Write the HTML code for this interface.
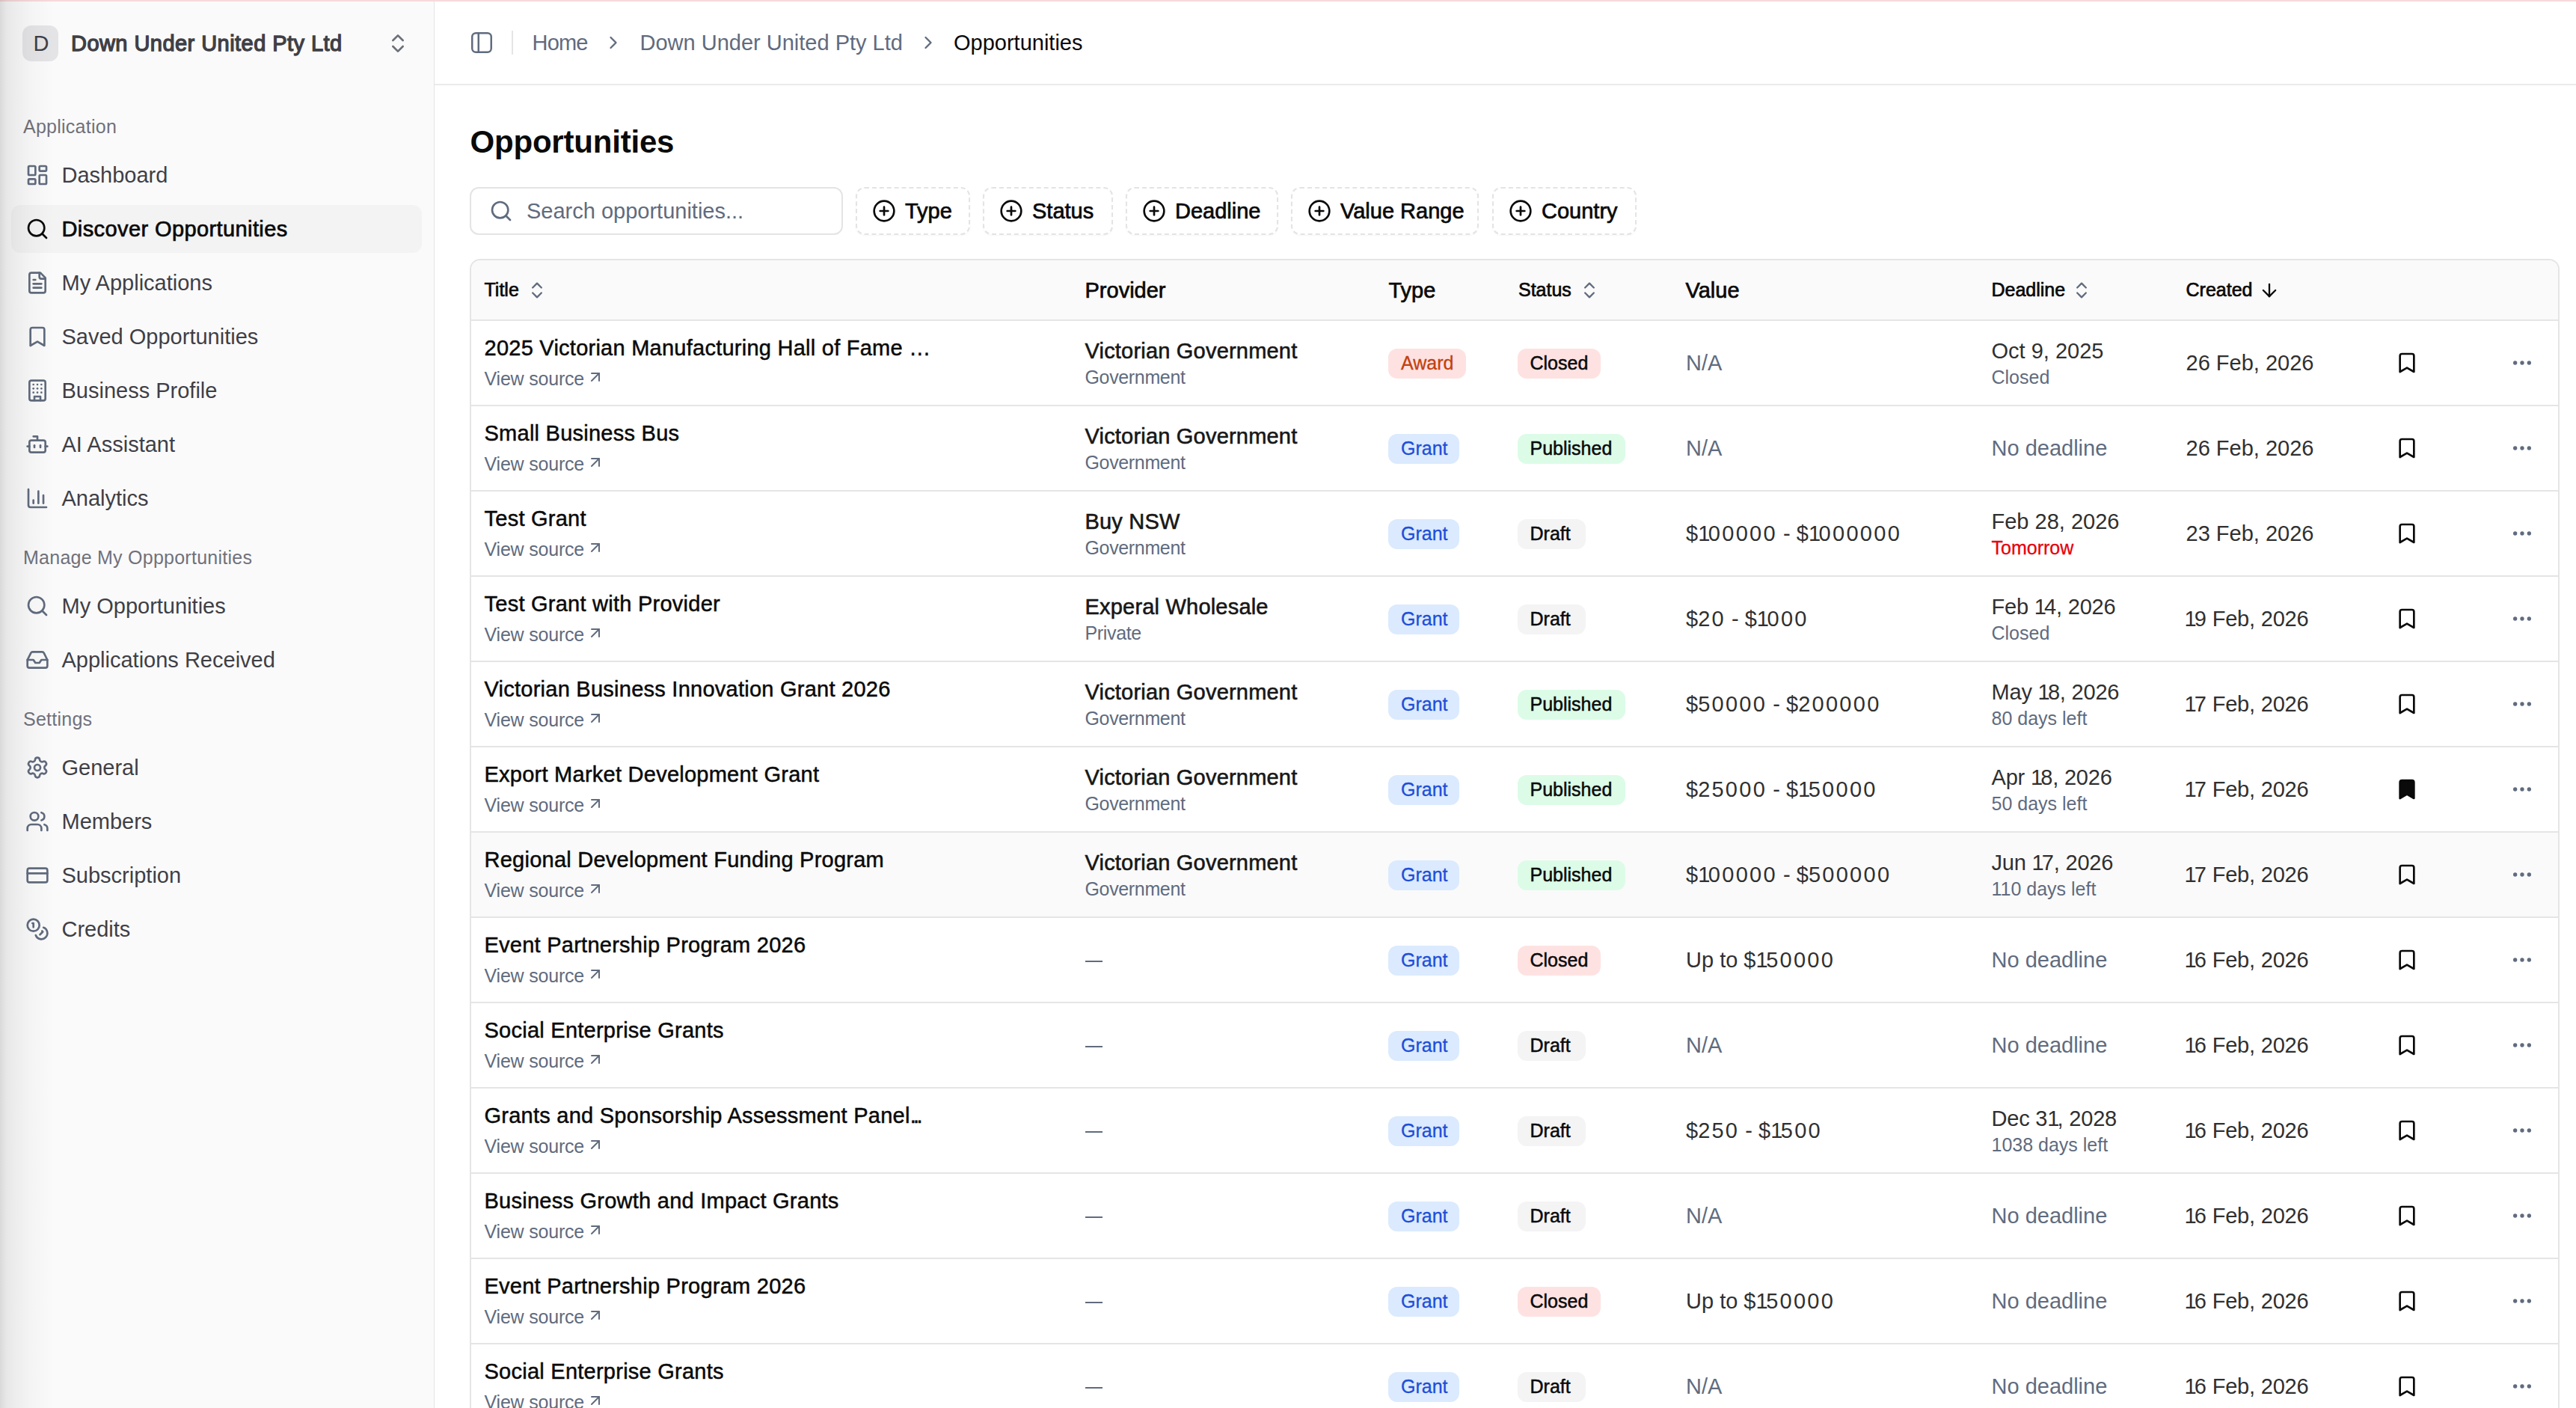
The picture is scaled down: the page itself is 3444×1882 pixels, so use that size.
<!DOCTYPE html>
<html><head><meta charset="utf-8"><title>Opportunities</title>
<style>
html,body{margin:0;padding:0;width:3444px;height:1882px;overflow:hidden;background:#fff;}
body{position:relative;font-family:"Liberation Sans",sans-serif;}
.t{position:absolute;line-height:40px;white-space:nowrap;}
svg{overflow:visible}
</style></head><body>
<div style="position:absolute;left:0px;top:0px;width:580px;height:1882px;background:#fafafa"></div>
<div style="position:absolute;left:580px;top:0px;width:1px;height:1882px;background:#e5e5e5"></div>
<div style="position:absolute;left:30px;top:34px;width:48px;height:48px;background:#e4e4e7;border-radius:12px"></div>
<div class="t" style="left:44.5px;top:38px;font-size:29px;color:#3f3f46;font-weight:400;">D</div>
<div class="t" style="left:95px;top:38px;font-size:29px;color:#3f3f46;font-weight:400;-webkit-text-stroke:1.3px #3f3f46;letter-spacing:0.45px">Down Under United Pty Ltd</div>
<svg style="position:absolute;left:515.5px;top:41.5px" width="32" height="32" viewBox="0 0 24 24" fill="none" stroke="#6b7078" stroke-width="2" stroke-linecap="round" stroke-linejoin="round"><path d="m7 15 5 5 5-5"/><path d="m7 9 5-5 5 5"/></svg>
<div class="t" style="left:31px;top:149px;font-size:25px;color:#71717a;font-weight:400;letter-spacing:0.25px">Application</div>
<svg style="position:absolute;left:34.0px;top:217.8px" width="32" height="32" viewBox="0 0 24 24" fill="none" stroke="#606b7e" stroke-width="2" stroke-linecap="round" stroke-linejoin="round"><rect width="7" height="9" x="3" y="3" rx="1"/><rect width="7" height="5" x="14" y="3" rx="1"/><rect width="7" height="9" x="14" y="12" rx="1"/><rect width="7" height="5" x="3" y="16" rx="1"/></svg>
<div class="t" style="left:82.5px;top:214px;font-size:29px;color:#3f3f46;font-weight:400;">Dashboard</div>
<div style="position:absolute;left:15px;top:274px;width:549px;height:64px;background:#f3f3f3;border-radius:12px"></div>
<svg style="position:absolute;left:34.0px;top:289.8px" width="32" height="32" viewBox="0 0 24 24" fill="none" stroke="#0a0a0a" stroke-width="2" stroke-linecap="round" stroke-linejoin="round"><circle cx="11" cy="11" r="8"/><path d="m21 21-4.34-4.34"/></svg>
<div class="t" style="left:82.5px;top:286px;font-size:29px;color:#0a0a0a;font-weight:400;-webkit-text-stroke:0.7px #0a0a0a;letter-spacing:0.4px">Discover Opportunities</div>
<svg style="position:absolute;left:34.0px;top:361.8px" width="32" height="32" viewBox="0 0 24 24" fill="none" stroke="#606b7e" stroke-width="2" stroke-linecap="round" stroke-linejoin="round"><path d="M15 2H6a2 2 0 0 0-2 2v16a2 2 0 0 0 2 2h12a2 2 0 0 0 2-2V7Z"/><path d="M14 2v4a2 2 0 0 0 2 2h4"/><path d="M10 9H8"/><path d="M16 13H8"/><path d="M16 17H8"/></svg>
<div class="t" style="left:82.5px;top:358px;font-size:29px;color:#3f3f46;font-weight:400;">My Applications</div>
<svg style="position:absolute;left:34.0px;top:433.8px" width="32" height="32" viewBox="0 0 24 24" fill="none" stroke="#606b7e" stroke-width="2" stroke-linecap="round" stroke-linejoin="round"><path d="m19 21-7-4-7 4V5a2 2 0 0 1 2-2h10a2 2 0 0 1 2 2v16z"/></svg>
<div class="t" style="left:82.5px;top:430px;font-size:29px;color:#3f3f46;font-weight:400;">Saved Opportunities</div>
<svg style="position:absolute;left:34.0px;top:505.79999999999995px" width="32" height="32" viewBox="0 0 24 24" fill="none" stroke="#606b7e" stroke-width="2" stroke-linecap="round" stroke-linejoin="round"><rect width="16" height="20" x="4" y="2" rx="2" ry="2"/><path d="M9 22v-4h6v4"/><path d="M8 6h.01"/><path d="M16 6h.01"/><path d="M12 6h.01"/><path d="M12 10h.01"/><path d="M12 14h.01"/><path d="M16 10h.01"/><path d="M16 14h.01"/><path d="M8 10h.01"/><path d="M8 14h.01"/></svg>
<div class="t" style="left:82.5px;top:502px;font-size:29px;color:#3f3f46;font-weight:400;">Business Profile</div>
<svg style="position:absolute;left:34.0px;top:577.8px" width="32" height="32" viewBox="0 0 24 24" fill="none" stroke="#606b7e" stroke-width="2" stroke-linecap="round" stroke-linejoin="round"><path d="M12 8V4H8"/><rect width="16" height="12" x="4" y="8" rx="2"/><path d="M2 14h2"/><path d="M20 14h2"/><path d="M15 13v2"/><path d="M9 13v2"/></svg>
<div class="t" style="left:82.5px;top:574px;font-size:29px;color:#3f3f46;font-weight:400;">AI Assistant</div>
<svg style="position:absolute;left:34.0px;top:649.8px" width="32" height="32" viewBox="0 0 24 24" fill="none" stroke="#606b7e" stroke-width="2" stroke-linecap="round" stroke-linejoin="round"><path d="M3 3v16a2 2 0 0 0 2 2h16"/><path d="M18 17V9"/><path d="M13 17V5"/><path d="M8 17v-3"/></svg>
<div class="t" style="left:82.5px;top:646px;font-size:29px;color:#3f3f46;font-weight:400;">Analytics</div>
<div class="t" style="left:31px;top:725px;font-size:25px;color:#71717a;font-weight:400;letter-spacing:0.25px">Manage My Oppportunities</div>
<svg style="position:absolute;left:34.0px;top:793.8px" width="32" height="32" viewBox="0 0 24 24" fill="none" stroke="#606b7e" stroke-width="2" stroke-linecap="round" stroke-linejoin="round"><circle cx="11" cy="11" r="8"/><path d="m21 21-4.34-4.34"/></svg>
<div class="t" style="left:82.5px;top:790px;font-size:29px;color:#3f3f46;font-weight:400;">My Opportunities</div>
<svg style="position:absolute;left:34.0px;top:865.8px" width="32" height="32" viewBox="0 0 24 24" fill="none" stroke="#606b7e" stroke-width="2" stroke-linecap="round" stroke-linejoin="round"><polyline points="22 12 16 12 14 15 10 15 8 12 2 12"/><path d="M5.45 5.11 2 12v6a2 2 0 0 0 2 2h16a2 2 0 0 0 2-2v-6l-3.45-6.89A2 2 0 0 0 16.76 4H7.24a2 2 0 0 0-1.79 1.11z"/></svg>
<div class="t" style="left:82.5px;top:862px;font-size:29px;color:#3f3f46;font-weight:400;">Applications Received</div>
<div class="t" style="left:31px;top:941px;font-size:25px;color:#71717a;font-weight:400;letter-spacing:0.25px">Settings</div>
<svg style="position:absolute;left:34.0px;top:1009.8px" width="32" height="32" viewBox="0 0 24 24" fill="none" stroke="#606b7e" stroke-width="2" stroke-linecap="round" stroke-linejoin="round"><path d="M9.671 4.136a2.34 2.34 0 0 1 4.659 0 2.34 2.34 0 0 0 3.319 1.915 2.34 2.34 0 0 1 2.33 4.033 2.34 2.34 0 0 0 0 3.831 2.34 2.34 0 0 1-2.33 4.033 2.34 2.34 0 0 0-3.319 1.915 2.34 2.34 0 0 1-4.659 0 2.34 2.34 0 0 0-3.32-1.915 2.34 2.34 0 0 1-2.33-4.033 2.34 2.34 0 0 0 0-3.831A2.34 2.34 0 0 1 6.35 6.051a2.34 2.34 0 0 0 3.319-1.915"/><circle cx="12" cy="12" r="3"/></svg>
<div class="t" style="left:82.5px;top:1006px;font-size:29px;color:#3f3f46;font-weight:400;">General</div>
<svg style="position:absolute;left:34.0px;top:1081.8px" width="32" height="32" viewBox="0 0 24 24" fill="none" stroke="#606b7e" stroke-width="2" stroke-linecap="round" stroke-linejoin="round"><path d="M16 21v-2a4 4 0 0 0-4-4H6a4 4 0 0 0-4 4v2"/><circle cx="9" cy="7" r="4"/><path d="M22 21v-2a4 4 0 0 0-3-3.87"/><path d="M16 3.13a4 4 0 0 1 0 7.75"/></svg>
<div class="t" style="left:82.5px;top:1078px;font-size:29px;color:#3f3f46;font-weight:400;">Members</div>
<svg style="position:absolute;left:34.0px;top:1153.8px" width="32" height="32" viewBox="0 0 24 24" fill="none" stroke="#606b7e" stroke-width="2" stroke-linecap="round" stroke-linejoin="round"><rect width="20" height="14" x="2" y="5" rx="2"/><line x1="2" x2="22" y1="10" y2="10"/></svg>
<div class="t" style="left:82.5px;top:1150px;font-size:29px;color:#3f3f46;font-weight:400;">Subscription</div>
<svg style="position:absolute;left:34.0px;top:1225.8px" width="32" height="32" viewBox="0 0 24 24" fill="none" stroke="#606b7e" stroke-width="2" stroke-linecap="round" stroke-linejoin="round"><circle cx="8" cy="8" r="6"/><path d="M18.09 10.37A6 6 0 1 1 10.34 18"/><path d="M7 6h1v4"/><path d="m16.71 13.88.7.71-2.82 2.82"/></svg>
<div class="t" style="left:82.5px;top:1222px;font-size:29px;color:#3f3f46;font-weight:400;">Credits</div>
<div style="position:absolute;left:581px;top:112px;width:2863px;height:2px;background:#ebebeb"></div>
<div style="position:absolute;left:0px;top:0px;width:3444px;height:2px;background:#f7d9d9"></div>
<svg style="position:absolute;left:627.0px;top:39.8px" width="34" height="34" viewBox="0 0 24 24" fill="none" stroke="#606b7e" stroke-width="1.75" stroke-linecap="round" stroke-linejoin="round"><rect width="18" height="18" x="3" y="3" rx="3.5"/><path d="M9 3v18"/></svg>
<div style="position:absolute;left:684px;top:41px;width:2px;height:32px;background:#e5e5e5"></div>
<div class="t" style="left:711.5px;top:37px;font-size:29px;color:#606b7e;font-weight:400;letter-spacing:-0.8px">Home</div>
<svg style="position:absolute;left:806.0px;top:43.0px" width="28" height="28" viewBox="0 0 24 24" fill="none" stroke="#606b7e" stroke-width="2" stroke-linecap="round" stroke-linejoin="round"><path d="m9 18 6-6-6-6"/></svg>
<div class="t" style="left:855.5px;top:37px;font-size:29px;color:#606b7e;font-weight:400;">Down Under United Pty Ltd</div>
<svg style="position:absolute;left:1227.0px;top:43.0px" width="28" height="28" viewBox="0 0 24 24" fill="none" stroke="#606b7e" stroke-width="2" stroke-linecap="round" stroke-linejoin="round"><path d="m9 18 6-6-6-6"/></svg>
<div class="t" style="left:1275px;top:37px;font-size:29px;color:#0a0a0a;font-weight:400;">Opportunities</div>
<div class="t" style="left:628.5px;top:170px;font-size:42px;color:#0a0a0a;font-weight:700;letter-spacing:-0.2px">Opportunities</div>
<div style="position:absolute;left:628px;top:250px;width:499px;height:64px;box-sizing:border-box;border:2px solid #e4e4e7;border-radius:12px;background:#fff"></div>
<svg style="position:absolute;left:654.0px;top:266.0px" width="32" height="32" viewBox="0 0 24 24" fill="none" stroke="#606b7e" stroke-width="2" stroke-linecap="round" stroke-linejoin="round"><circle cx="11" cy="11" r="8"/><path d="m21 21-4.34-4.34"/></svg>
<div class="t" style="left:704px;top:262px;font-size:29px;color:#606b7e;font-weight:400;">Search opportunities...</div>
<div style="position:absolute;left:1144px;top:250px;width:153px;height:64px;box-sizing:border-box;border:2px dashed #e4e4e7;border-radius:12px;background:#fff;box-shadow:0 1px 2px rgba(0,0,0,0.04)"></div>
<svg style="position:absolute;left:1165.5px;top:266.0px" width="32" height="32" viewBox="0 0 24 24" fill="none" stroke="#0a0a0a" stroke-width="2" stroke-linecap="round" stroke-linejoin="round"><circle cx="12" cy="12" r="10"/><path d="M8 12h8"/><path d="M12 8v8"/></svg>
<div class="t" style="left:1210px;top:262px;font-size:29px;color:#0a0a0a;font-weight:400;-webkit-text-stroke:0.7px #0a0a0a">Type</div>
<div style="position:absolute;left:1314px;top:250px;width:174px;height:64px;box-sizing:border-box;border:2px dashed #e4e4e7;border-radius:12px;background:#fff;box-shadow:0 1px 2px rgba(0,0,0,0.04)"></div>
<svg style="position:absolute;left:1335.5px;top:266.0px" width="32" height="32" viewBox="0 0 24 24" fill="none" stroke="#0a0a0a" stroke-width="2" stroke-linecap="round" stroke-linejoin="round"><circle cx="12" cy="12" r="10"/><path d="M8 12h8"/><path d="M12 8v8"/></svg>
<div class="t" style="left:1380px;top:262px;font-size:29px;color:#0a0a0a;font-weight:400;-webkit-text-stroke:0.7px #0a0a0a">Status</div>
<div style="position:absolute;left:1505px;top:250px;width:204px;height:64px;box-sizing:border-box;border:2px dashed #e4e4e7;border-radius:12px;background:#fff;box-shadow:0 1px 2px rgba(0,0,0,0.04)"></div>
<svg style="position:absolute;left:1526.5px;top:266.0px" width="32" height="32" viewBox="0 0 24 24" fill="none" stroke="#0a0a0a" stroke-width="2" stroke-linecap="round" stroke-linejoin="round"><circle cx="12" cy="12" r="10"/><path d="M8 12h8"/><path d="M12 8v8"/></svg>
<div class="t" style="left:1571px;top:262px;font-size:29px;color:#0a0a0a;font-weight:400;-webkit-text-stroke:0.7px #0a0a0a">Deadline</div>
<div style="position:absolute;left:1726px;top:250px;width:251px;height:64px;box-sizing:border-box;border:2px dashed #e4e4e7;border-radius:12px;background:#fff;box-shadow:0 1px 2px rgba(0,0,0,0.04)"></div>
<svg style="position:absolute;left:1747.5px;top:266.0px" width="32" height="32" viewBox="0 0 24 24" fill="none" stroke="#0a0a0a" stroke-width="2" stroke-linecap="round" stroke-linejoin="round"><circle cx="12" cy="12" r="10"/><path d="M8 12h8"/><path d="M12 8v8"/></svg>
<div class="t" style="left:1792px;top:262px;font-size:29px;color:#0a0a0a;font-weight:400;-webkit-text-stroke:0.7px #0a0a0a">Value Range</div>
<div style="position:absolute;left:1995px;top:250px;width:193px;height:64px;box-sizing:border-box;border:2px dashed #e4e4e7;border-radius:12px;background:#fff;box-shadow:0 1px 2px rgba(0,0,0,0.04)"></div>
<svg style="position:absolute;left:2016.5px;top:266.0px" width="32" height="32" viewBox="0 0 24 24" fill="none" stroke="#0a0a0a" stroke-width="2" stroke-linecap="round" stroke-linejoin="round"><circle cx="12" cy="12" r="10"/><path d="M8 12h8"/><path d="M12 8v8"/></svg>
<div class="t" style="left:2061px;top:262px;font-size:29px;color:#0a0a0a;font-weight:400;-webkit-text-stroke:0.7px #0a0a0a">Country</div>
<div style="position:absolute;left:628px;top:346px;width:2794px;height:1556px;box-sizing:border-box;border:2px solid #e5e5e5;border-radius:14px;background:#fff;overflow:hidden"></div>
<div style="position:absolute;left:630px;top:348px;width:2790px;height:79px;background:#fafafa;border-radius:12px 12px 0 0"></div>
<div style="position:absolute;left:630px;top:427px;width:2790px;height:2px;background:#e5e5e5"></div>
<div class="t" style="left:647.5px;top:367px;font-size:25px;color:#0a0a0a;font-weight:400;-webkit-text-stroke:0.7px #0a0a0a">Title</div>
<svg style="position:absolute;left:704.0px;top:374.0px" width="28" height="28" viewBox="0 0 24 24" fill="none" stroke="#606b7e" stroke-width="2" stroke-linecap="round" stroke-linejoin="round"><path d="m7 15 5 5 5-5"/><path d="m7 9 5-5 5 5"/></svg>
<div class="t" style="left:1450.5px;top:368px;font-size:29px;color:#0a0a0a;font-weight:400;-webkit-text-stroke:0.7px #0a0a0a">Provider</div>
<div class="t" style="left:1856.5px;top:368px;font-size:29px;color:#0a0a0a;font-weight:400;-webkit-text-stroke:0.7px #0a0a0a">Type</div>
<div class="t" style="left:2030px;top:367px;font-size:25px;color:#0a0a0a;font-weight:400;-webkit-text-stroke:0.7px #0a0a0a">Status</div>
<svg style="position:absolute;left:2111.0px;top:374.0px" width="28" height="28" viewBox="0 0 24 24" fill="none" stroke="#606b7e" stroke-width="2" stroke-linecap="round" stroke-linejoin="round"><path d="m7 15 5 5 5-5"/><path d="m7 9 5-5 5 5"/></svg>
<div class="t" style="left:2253.5px;top:368px;font-size:29px;color:#0a0a0a;font-weight:400;-webkit-text-stroke:0.7px #0a0a0a">Value</div>
<div class="t" style="left:2662.5px;top:367px;font-size:25px;color:#0a0a0a;font-weight:400;-webkit-text-stroke:0.7px #0a0a0a">Deadline</div>
<svg style="position:absolute;left:2769.0px;top:374.0px" width="28" height="28" viewBox="0 0 24 24" fill="none" stroke="#606b7e" stroke-width="2" stroke-linecap="round" stroke-linejoin="round"><path d="m7 15 5 5 5-5"/><path d="m7 9 5-5 5 5"/></svg>
<div class="t" style="left:2922.5px;top:367px;font-size:25px;color:#0a0a0a;font-weight:400;-webkit-text-stroke:0.7px #0a0a0a">Created</div>
<svg style="position:absolute;left:3020.0px;top:374.0px" width="28" height="28" viewBox="0 0 24 24" fill="none" stroke="#0a0a0a" stroke-width="2" stroke-linecap="round" stroke-linejoin="round"><path d="M12 5v14"/><path d="m19 12-7 7-7-7"/></svg>
<div style="position:absolute;left:630px;top:541px;width:2790px;height:2px;background:#e5e5e5"></div>
<div class="t" style="left:647.5px;top:445px;font-size:29px;color:#0a0a0a;font-weight:400;-webkit-text-stroke:0.5px #0a0a0a;letter-spacing:0.25px">2025 Victorian Manufacturing Hall of Fame …</div>
<div class="t" style="left:647.5px;top:486px;font-size:25px;color:#606b7e;font-weight:400;letter-spacing:-0.2px">View source</div>
<svg style="position:absolute;left:784.0px;top:492.0px" width="24" height="24" viewBox="0 0 24 24" fill="none" stroke="#606b7e" stroke-width="2" stroke-linecap="round" stroke-linejoin="round"><path d="M7 7h10v10"/><path d="M7 17 17 7"/></svg>
<div class="t" style="left:1450.5px;top:449px;font-size:29px;color:#171717;font-weight:400;-webkit-text-stroke:0.6px #1a1a1a;letter-spacing:0.2px">Victorian Government</div>
<div class="t" style="left:1450.5px;top:484px;font-size:25px;color:#606b7e;font-weight:400;letter-spacing:-0.35px">Government</div>
<div style="position:absolute;left:1856px;top:466px;width:104px;height:40px;background:#fee2e2;border-radius:12px"></div>
<div class="t" style="left:1873px;top:465px;font-size:25px;color:#c2410c;font-weight:400;-webkit-text-stroke:0.3px #c2410c">Award</div>
<div style="position:absolute;left:2029px;top:466px;width:111px;height:40px;background:#fee2e2;border-radius:12px"></div>
<div class="t" style="left:2045.5px;top:465px;font-size:25px;color:#0a0a0a;font-weight:400;-webkit-text-stroke:0.5px #0a0a0a">Closed</div>
<div class="t" style="left:2254px;top:465px;font-size:29px;color:#606b7e;font-weight:400;">N/A</div>
<div class="t" style="left:2662.5px;top:449px;font-size:29px;color:#303030;font-weight:400;">Oct 9, 2025</div>
<div class="t" style="left:2662.5px;top:484px;font-size:25px;color:#606b7e;font-weight:400;">Closed</div>
<div class="t" style="left:2922.5px;top:465px;font-size:29px;color:#303030;font-weight:400;">26 Feb, 2026</div>
<svg style="position:absolute;left:3202.0px;top:469.0px" width="32" height="32" viewBox="0 0 24 24" fill="none" stroke="#0a0a0a" stroke-width="2" stroke-linecap="round" stroke-linejoin="round"><path d="m19 21-7-4-7 4V5a2 2 0 0 1 2-2h10a2 2 0 0 1 2 2v16z"/></svg>
<svg style="position:absolute;left:3356.0px;top:469.0px" width="32" height="32" viewBox="0 0 24 24" fill="none" stroke="#606b7e" stroke-width="2" stroke-linecap="round" stroke-linejoin="round"><circle cx="12" cy="12" r="1"/><circle cx="19" cy="12" r="1"/><circle cx="5" cy="12" r="1"/></svg>
<div style="position:absolute;left:630px;top:655px;width:2790px;height:2px;background:#e5e5e5"></div>
<div class="t" style="left:647.5px;top:559px;font-size:29px;color:#0a0a0a;font-weight:400;-webkit-text-stroke:0.5px #0a0a0a;letter-spacing:0.25px">Small Business Bus</div>
<div class="t" style="left:647.5px;top:600px;font-size:25px;color:#606b7e;font-weight:400;letter-spacing:-0.2px">View source</div>
<svg style="position:absolute;left:784.0px;top:606.0px" width="24" height="24" viewBox="0 0 24 24" fill="none" stroke="#606b7e" stroke-width="2" stroke-linecap="round" stroke-linejoin="round"><path d="M7 7h10v10"/><path d="M7 17 17 7"/></svg>
<div class="t" style="left:1450.5px;top:563px;font-size:29px;color:#171717;font-weight:400;-webkit-text-stroke:0.6px #1a1a1a;letter-spacing:0.2px">Victorian Government</div>
<div class="t" style="left:1450.5px;top:598px;font-size:25px;color:#606b7e;font-weight:400;letter-spacing:-0.35px">Government</div>
<div style="position:absolute;left:1856px;top:580px;width:95px;height:40px;background:#dbeafe;border-radius:12px"></div>
<div class="t" style="left:1873px;top:579px;font-size:25px;color:#1d4ed8;font-weight:400;-webkit-text-stroke:0.3px #1d4ed8">Grant</div>
<div style="position:absolute;left:2029px;top:580px;width:144px;height:40px;background:#dcfce7;border-radius:12px"></div>
<div class="t" style="left:2045.5px;top:579px;font-size:25px;color:#0a0a0a;font-weight:400;-webkit-text-stroke:0.5px #0a0a0a">Published</div>
<div class="t" style="left:2254px;top:579px;font-size:29px;color:#606b7e;font-weight:400;">N/A</div>
<div class="t" style="left:2662.5px;top:579px;font-size:29px;color:#606b7e;font-weight:400;">No deadline</div>
<div class="t" style="left:2922.5px;top:579px;font-size:29px;color:#303030;font-weight:400;">26 Feb, 2026</div>
<svg style="position:absolute;left:3202.0px;top:583.0px" width="32" height="32" viewBox="0 0 24 24" fill="none" stroke="#0a0a0a" stroke-width="2" stroke-linecap="round" stroke-linejoin="round"><path d="m19 21-7-4-7 4V5a2 2 0 0 1 2-2h10a2 2 0 0 1 2 2v16z"/></svg>
<svg style="position:absolute;left:3356.0px;top:583.0px" width="32" height="32" viewBox="0 0 24 24" fill="none" stroke="#606b7e" stroke-width="2" stroke-linecap="round" stroke-linejoin="round"><circle cx="12" cy="12" r="1"/><circle cx="19" cy="12" r="1"/><circle cx="5" cy="12" r="1"/></svg>
<div style="position:absolute;left:630px;top:769px;width:2790px;height:2px;background:#e5e5e5"></div>
<div class="t" style="left:647.5px;top:673px;font-size:29px;color:#0a0a0a;font-weight:400;-webkit-text-stroke:0.5px #0a0a0a;letter-spacing:0.25px">Test Grant</div>
<div class="t" style="left:647.5px;top:714px;font-size:25px;color:#606b7e;font-weight:400;letter-spacing:-0.2px">View source</div>
<svg style="position:absolute;left:784.0px;top:720.0px" width="24" height="24" viewBox="0 0 24 24" fill="none" stroke="#606b7e" stroke-width="2" stroke-linecap="round" stroke-linejoin="round"><path d="M7 7h10v10"/><path d="M7 17 17 7"/></svg>
<div class="t" style="left:1450.5px;top:677px;font-size:29px;color:#171717;font-weight:400;-webkit-text-stroke:0.6px #1a1a1a;letter-spacing:0.2px">Buy NSW</div>
<div class="t" style="left:1450.5px;top:712px;font-size:25px;color:#606b7e;font-weight:400;letter-spacing:-0.35px">Government</div>
<div style="position:absolute;left:1856px;top:694px;width:95px;height:40px;background:#dbeafe;border-radius:12px"></div>
<div class="t" style="left:1873px;top:693px;font-size:25px;color:#1d4ed8;font-weight:400;-webkit-text-stroke:0.3px #1d4ed8">Grant</div>
<div style="position:absolute;left:2029px;top:694px;width:91px;height:40px;background:#f4f4f5;border-radius:12px"></div>
<div class="t" style="left:2045.5px;top:693px;font-size:25px;color:#0a0a0a;font-weight:400;-webkit-text-stroke:0.5px #0a0a0a">Draft</div>
<div class="t" style="left:2254px;top:693px;font-size:29px;color:#303030;font-weight:400;">$<span style="letter-spacing:-2.5px">1</span><span style="letter-spacing:2.3px">0</span><span style="letter-spacing:2.3px">0</span><span style="letter-spacing:2.3px">0</span><span style="letter-spacing:2.3px">0</span><span style="letter-spacing:2.3px">0</span> - $<span style="letter-spacing:-2.5px">1</span><span style="letter-spacing:2.3px">0</span><span style="letter-spacing:2.3px">0</span><span style="letter-spacing:2.3px">0</span><span style="letter-spacing:2.3px">0</span><span style="letter-spacing:2.3px">0</span><span style="letter-spacing:2.3px">0</span></div>
<div class="t" style="left:2662.5px;top:677px;font-size:29px;color:#303030;font-weight:400;">Feb 28, 2026</div>
<div class="t" style="left:2662.5px;top:712px;font-size:25px;color:#e7000b;font-weight:400;-webkit-text-stroke:0.3px #e7000b">Tomorrow</div>
<div class="t" style="left:2922.5px;top:693px;font-size:29px;color:#303030;font-weight:400;">23 Feb, 2026</div>
<svg style="position:absolute;left:3202.0px;top:697.0px" width="32" height="32" viewBox="0 0 24 24" fill="none" stroke="#0a0a0a" stroke-width="2" stroke-linecap="round" stroke-linejoin="round"><path d="m19 21-7-4-7 4V5a2 2 0 0 1 2-2h10a2 2 0 0 1 2 2v16z"/></svg>
<svg style="position:absolute;left:3356.0px;top:697.0px" width="32" height="32" viewBox="0 0 24 24" fill="none" stroke="#606b7e" stroke-width="2" stroke-linecap="round" stroke-linejoin="round"><circle cx="12" cy="12" r="1"/><circle cx="19" cy="12" r="1"/><circle cx="5" cy="12" r="1"/></svg>
<div style="position:absolute;left:630px;top:883px;width:2790px;height:2px;background:#e5e5e5"></div>
<div class="t" style="left:647.5px;top:787px;font-size:29px;color:#0a0a0a;font-weight:400;-webkit-text-stroke:0.5px #0a0a0a;letter-spacing:0.25px">Test Grant with Provider</div>
<div class="t" style="left:647.5px;top:828px;font-size:25px;color:#606b7e;font-weight:400;letter-spacing:-0.2px">View source</div>
<svg style="position:absolute;left:784.0px;top:834.0px" width="24" height="24" viewBox="0 0 24 24" fill="none" stroke="#606b7e" stroke-width="2" stroke-linecap="round" stroke-linejoin="round"><path d="M7 7h10v10"/><path d="M7 17 17 7"/></svg>
<div class="t" style="left:1450.5px;top:791px;font-size:29px;color:#171717;font-weight:400;-webkit-text-stroke:0.6px #1a1a1a;letter-spacing:0.2px">Experal Wholesale</div>
<div class="t" style="left:1450.5px;top:826px;font-size:25px;color:#606b7e;font-weight:400;letter-spacing:-0.35px">Private</div>
<div style="position:absolute;left:1856px;top:808px;width:95px;height:40px;background:#dbeafe;border-radius:12px"></div>
<div class="t" style="left:1873px;top:807px;font-size:25px;color:#1d4ed8;font-weight:400;-webkit-text-stroke:0.3px #1d4ed8">Grant</div>
<div style="position:absolute;left:2029px;top:808px;width:91px;height:40px;background:#f4f4f5;border-radius:12px"></div>
<div class="t" style="left:2045.5px;top:807px;font-size:25px;color:#0a0a0a;font-weight:400;-webkit-text-stroke:0.5px #0a0a0a">Draft</div>
<div class="t" style="left:2254px;top:807px;font-size:29px;color:#303030;font-weight:400;">$<span style="letter-spacing:2.2px">2</span><span style="letter-spacing:2.3px">0</span> - $<span style="letter-spacing:-2.5px">1</span><span style="letter-spacing:2.3px">0</span><span style="letter-spacing:2.3px">0</span><span style="letter-spacing:2.3px">0</span></div>
<div class="t" style="left:2662.5px;top:791px;font-size:29px;color:#303030;font-weight:400;"><span style="letter-spacing:-0.2px">Feb <span style="letter-spacing:-2.8px">1</span>4, 2026</span></div>
<div class="t" style="left:2662.5px;top:826px;font-size:25px;color:#606b7e;font-weight:400;">Closed</div>
<div class="t" style="left:2920.5px;top:807px;font-size:29px;color:#303030;font-weight:400;"><span style="letter-spacing:-0.2px"><span style="letter-spacing:-2.8px">1</span>9 Feb, 2026</span></div>
<svg style="position:absolute;left:3202.0px;top:811.0px" width="32" height="32" viewBox="0 0 24 24" fill="none" stroke="#0a0a0a" stroke-width="2" stroke-linecap="round" stroke-linejoin="round"><path d="m19 21-7-4-7 4V5a2 2 0 0 1 2-2h10a2 2 0 0 1 2 2v16z"/></svg>
<svg style="position:absolute;left:3356.0px;top:811.0px" width="32" height="32" viewBox="0 0 24 24" fill="none" stroke="#606b7e" stroke-width="2" stroke-linecap="round" stroke-linejoin="round"><circle cx="12" cy="12" r="1"/><circle cx="19" cy="12" r="1"/><circle cx="5" cy="12" r="1"/></svg>
<div style="position:absolute;left:630px;top:997px;width:2790px;height:2px;background:#e5e5e5"></div>
<div class="t" style="left:647.5px;top:901px;font-size:29px;color:#0a0a0a;font-weight:400;-webkit-text-stroke:0.5px #0a0a0a;letter-spacing:0.25px">Victorian Business Innovation Grant 2026</div>
<div class="t" style="left:647.5px;top:942px;font-size:25px;color:#606b7e;font-weight:400;letter-spacing:-0.2px">View source</div>
<svg style="position:absolute;left:784.0px;top:948.0px" width="24" height="24" viewBox="0 0 24 24" fill="none" stroke="#606b7e" stroke-width="2" stroke-linecap="round" stroke-linejoin="round"><path d="M7 7h10v10"/><path d="M7 17 17 7"/></svg>
<div class="t" style="left:1450.5px;top:905px;font-size:29px;color:#171717;font-weight:400;-webkit-text-stroke:0.6px #1a1a1a;letter-spacing:0.2px">Victorian Government</div>
<div class="t" style="left:1450.5px;top:940px;font-size:25px;color:#606b7e;font-weight:400;letter-spacing:-0.35px">Government</div>
<div style="position:absolute;left:1856px;top:922px;width:95px;height:40px;background:#dbeafe;border-radius:12px"></div>
<div class="t" style="left:1873px;top:921px;font-size:25px;color:#1d4ed8;font-weight:400;-webkit-text-stroke:0.3px #1d4ed8">Grant</div>
<div style="position:absolute;left:2029px;top:922px;width:144px;height:40px;background:#dcfce7;border-radius:12px"></div>
<div class="t" style="left:2045.5px;top:921px;font-size:25px;color:#0a0a0a;font-weight:400;-webkit-text-stroke:0.5px #0a0a0a">Published</div>
<div class="t" style="left:2254px;top:921px;font-size:29px;color:#303030;font-weight:400;">$<span style="letter-spacing:2.2px">5</span><span style="letter-spacing:2.3px">0</span><span style="letter-spacing:2.3px">0</span><span style="letter-spacing:2.3px">0</span><span style="letter-spacing:2.3px">0</span> - $<span style="letter-spacing:2.2px">2</span><span style="letter-spacing:2.3px">0</span><span style="letter-spacing:2.3px">0</span><span style="letter-spacing:2.3px">0</span><span style="letter-spacing:2.3px">0</span><span style="letter-spacing:2.3px">0</span></div>
<div class="t" style="left:2662.5px;top:905px;font-size:29px;color:#303030;font-weight:400;"><span style="letter-spacing:-0.2px">May <span style="letter-spacing:-2.8px">1</span>8, 2026</span></div>
<div class="t" style="left:2662.5px;top:940px;font-size:25px;color:#606b7e;font-weight:400;">80 days left</div>
<div class="t" style="left:2920.5px;top:921px;font-size:29px;color:#303030;font-weight:400;"><span style="letter-spacing:-0.2px"><span style="letter-spacing:-2.8px">1</span>7 Feb, 2026</span></div>
<svg style="position:absolute;left:3202.0px;top:925.0px" width="32" height="32" viewBox="0 0 24 24" fill="none" stroke="#0a0a0a" stroke-width="2" stroke-linecap="round" stroke-linejoin="round"><path d="m19 21-7-4-7 4V5a2 2 0 0 1 2-2h10a2 2 0 0 1 2 2v16z"/></svg>
<svg style="position:absolute;left:3356.0px;top:925.0px" width="32" height="32" viewBox="0 0 24 24" fill="none" stroke="#606b7e" stroke-width="2" stroke-linecap="round" stroke-linejoin="round"><circle cx="12" cy="12" r="1"/><circle cx="19" cy="12" r="1"/><circle cx="5" cy="12" r="1"/></svg>
<div style="position:absolute;left:630px;top:1111px;width:2790px;height:2px;background:#e5e5e5"></div>
<div class="t" style="left:647.5px;top:1015px;font-size:29px;color:#0a0a0a;font-weight:400;-webkit-text-stroke:0.5px #0a0a0a;letter-spacing:0.25px">Export Market Development Grant</div>
<div class="t" style="left:647.5px;top:1056px;font-size:25px;color:#606b7e;font-weight:400;letter-spacing:-0.2px">View source</div>
<svg style="position:absolute;left:784.0px;top:1062.0px" width="24" height="24" viewBox="0 0 24 24" fill="none" stroke="#606b7e" stroke-width="2" stroke-linecap="round" stroke-linejoin="round"><path d="M7 7h10v10"/><path d="M7 17 17 7"/></svg>
<div class="t" style="left:1450.5px;top:1019px;font-size:29px;color:#171717;font-weight:400;-webkit-text-stroke:0.6px #1a1a1a;letter-spacing:0.2px">Victorian Government</div>
<div class="t" style="left:1450.5px;top:1054px;font-size:25px;color:#606b7e;font-weight:400;letter-spacing:-0.35px">Government</div>
<div style="position:absolute;left:1856px;top:1036px;width:95px;height:40px;background:#dbeafe;border-radius:12px"></div>
<div class="t" style="left:1873px;top:1035px;font-size:25px;color:#1d4ed8;font-weight:400;-webkit-text-stroke:0.3px #1d4ed8">Grant</div>
<div style="position:absolute;left:2029px;top:1036px;width:144px;height:40px;background:#dcfce7;border-radius:12px"></div>
<div class="t" style="left:2045.5px;top:1035px;font-size:25px;color:#0a0a0a;font-weight:400;-webkit-text-stroke:0.5px #0a0a0a">Published</div>
<div class="t" style="left:2254px;top:1035px;font-size:29px;color:#303030;font-weight:400;">$<span style="letter-spacing:2.2px">2</span><span style="letter-spacing:2.2px">5</span><span style="letter-spacing:2.3px">0</span><span style="letter-spacing:2.3px">0</span><span style="letter-spacing:2.3px">0</span> - $<span style="letter-spacing:-2.5px">1</span><span style="letter-spacing:2.2px">5</span><span style="letter-spacing:2.3px">0</span><span style="letter-spacing:2.3px">0</span><span style="letter-spacing:2.3px">0</span><span style="letter-spacing:2.3px">0</span></div>
<div class="t" style="left:2662.5px;top:1019px;font-size:29px;color:#303030;font-weight:400;"><span style="letter-spacing:-0.2px">Apr <span style="letter-spacing:-2.8px">1</span>8, 2026</span></div>
<div class="t" style="left:2662.5px;top:1054px;font-size:25px;color:#606b7e;font-weight:400;">50 days left</div>
<div class="t" style="left:2920.5px;top:1035px;font-size:29px;color:#303030;font-weight:400;"><span style="letter-spacing:-0.2px"><span style="letter-spacing:-2.8px">1</span>7 Feb, 2026</span></div>
<svg style="position:absolute;left:3202.0px;top:1039.0px" width="32" height="32" viewBox="0 0 24 24" fill="#0a0a0a" stroke="#0a0a0a" stroke-width="2" stroke-linecap="round" stroke-linejoin="round"><path d="m19 21-7-4-7 4V5a2 2 0 0 1 2-2h10a2 2 0 0 1 2 2v16z"/></svg>
<svg style="position:absolute;left:3356.0px;top:1039.0px" width="32" height="32" viewBox="0 0 24 24" fill="none" stroke="#606b7e" stroke-width="2" stroke-linecap="round" stroke-linejoin="round"><circle cx="12" cy="12" r="1"/><circle cx="19" cy="12" r="1"/><circle cx="5" cy="12" r="1"/></svg>
<div style="position:absolute;left:630px;top:1113px;width:2790px;height:112px;background:#fafafa"></div>
<div style="position:absolute;left:630px;top:1225px;width:2790px;height:2px;background:#e5e5e5"></div>
<div class="t" style="left:647.5px;top:1129px;font-size:29px;color:#0a0a0a;font-weight:400;-webkit-text-stroke:0.5px #0a0a0a;letter-spacing:0.25px">Regional Development Funding Program</div>
<div class="t" style="left:647.5px;top:1170px;font-size:25px;color:#606b7e;font-weight:400;letter-spacing:-0.2px">View source</div>
<svg style="position:absolute;left:784.0px;top:1176.0px" width="24" height="24" viewBox="0 0 24 24" fill="none" stroke="#606b7e" stroke-width="2" stroke-linecap="round" stroke-linejoin="round"><path d="M7 7h10v10"/><path d="M7 17 17 7"/></svg>
<div class="t" style="left:1450.5px;top:1133px;font-size:29px;color:#171717;font-weight:400;-webkit-text-stroke:0.6px #1a1a1a;letter-spacing:0.2px">Victorian Government</div>
<div class="t" style="left:1450.5px;top:1168px;font-size:25px;color:#606b7e;font-weight:400;letter-spacing:-0.35px">Government</div>
<div style="position:absolute;left:1856px;top:1150px;width:95px;height:40px;background:#dbeafe;border-radius:12px"></div>
<div class="t" style="left:1873px;top:1149px;font-size:25px;color:#1d4ed8;font-weight:400;-webkit-text-stroke:0.3px #1d4ed8">Grant</div>
<div style="position:absolute;left:2029px;top:1150px;width:144px;height:40px;background:#dcfce7;border-radius:12px"></div>
<div class="t" style="left:2045.5px;top:1149px;font-size:25px;color:#0a0a0a;font-weight:400;-webkit-text-stroke:0.5px #0a0a0a">Published</div>
<div class="t" style="left:2254px;top:1149px;font-size:29px;color:#303030;font-weight:400;">$<span style="letter-spacing:-2.5px">1</span><span style="letter-spacing:2.3px">0</span><span style="letter-spacing:2.3px">0</span><span style="letter-spacing:2.3px">0</span><span style="letter-spacing:2.3px">0</span><span style="letter-spacing:2.3px">0</span> - $<span style="letter-spacing:2.2px">5</span><span style="letter-spacing:2.3px">0</span><span style="letter-spacing:2.3px">0</span><span style="letter-spacing:2.3px">0</span><span style="letter-spacing:2.3px">0</span><span style="letter-spacing:2.3px">0</span></div>
<div class="t" style="left:2662.5px;top:1133px;font-size:29px;color:#303030;font-weight:400;"><span style="letter-spacing:-0.2px">Jun <span style="letter-spacing:-2.8px">1</span>7, 2026</span></div>
<div class="t" style="left:2662.5px;top:1168px;font-size:25px;color:#606b7e;font-weight:400;">110 days left</div>
<div class="t" style="left:2920.5px;top:1149px;font-size:29px;color:#303030;font-weight:400;"><span style="letter-spacing:-0.2px"><span style="letter-spacing:-2.8px">1</span>7 Feb, 2026</span></div>
<svg style="position:absolute;left:3202.0px;top:1153.0px" width="32" height="32" viewBox="0 0 24 24" fill="none" stroke="#0a0a0a" stroke-width="2" stroke-linecap="round" stroke-linejoin="round"><path d="m19 21-7-4-7 4V5a2 2 0 0 1 2-2h10a2 2 0 0 1 2 2v16z"/></svg>
<svg style="position:absolute;left:3356.0px;top:1153.0px" width="32" height="32" viewBox="0 0 24 24" fill="none" stroke="#606b7e" stroke-width="2" stroke-linecap="round" stroke-linejoin="round"><circle cx="12" cy="12" r="1"/><circle cx="19" cy="12" r="1"/><circle cx="5" cy="12" r="1"/></svg>
<div style="position:absolute;left:630px;top:1339px;width:2790px;height:2px;background:#e5e5e5"></div>
<div class="t" style="left:647.5px;top:1243px;font-size:29px;color:#0a0a0a;font-weight:400;-webkit-text-stroke:0.5px #0a0a0a;letter-spacing:0.25px">Event Partnership Program 2026</div>
<div class="t" style="left:647.5px;top:1284px;font-size:25px;color:#606b7e;font-weight:400;letter-spacing:-0.2px">View source</div>
<svg style="position:absolute;left:784.0px;top:1290.0px" width="24" height="24" viewBox="0 0 24 24" fill="none" stroke="#606b7e" stroke-width="2" stroke-linecap="round" stroke-linejoin="round"><path d="M7 7h10v10"/><path d="M7 17 17 7"/></svg>
<div style="position:absolute;left:1450.5px;top:1284px;width:23px;height:2px;background:#606b7e"></div>
<div style="position:absolute;left:1856px;top:1264px;width:95px;height:40px;background:#dbeafe;border-radius:12px"></div>
<div class="t" style="left:1873px;top:1263px;font-size:25px;color:#1d4ed8;font-weight:400;-webkit-text-stroke:0.3px #1d4ed8">Grant</div>
<div style="position:absolute;left:2029px;top:1264px;width:111px;height:40px;background:#fee2e2;border-radius:12px"></div>
<div class="t" style="left:2045.5px;top:1263px;font-size:25px;color:#0a0a0a;font-weight:400;-webkit-text-stroke:0.5px #0a0a0a">Closed</div>
<div class="t" style="left:2254px;top:1263px;font-size:29px;color:#303030;font-weight:400;">Up to $<span style="letter-spacing:-2.5px">1</span><span style="letter-spacing:2.2px">5</span><span style="letter-spacing:2.3px">0</span><span style="letter-spacing:2.3px">0</span><span style="letter-spacing:2.3px">0</span><span style="letter-spacing:2.3px">0</span></div>
<div class="t" style="left:2662.5px;top:1263px;font-size:29px;color:#606b7e;font-weight:400;">No deadline</div>
<div class="t" style="left:2920.5px;top:1263px;font-size:29px;color:#303030;font-weight:400;"><span style="letter-spacing:-0.2px"><span style="letter-spacing:-2.8px">1</span>6 Feb, 2026</span></div>
<svg style="position:absolute;left:3202.0px;top:1267.0px" width="32" height="32" viewBox="0 0 24 24" fill="none" stroke="#0a0a0a" stroke-width="2" stroke-linecap="round" stroke-linejoin="round"><path d="m19 21-7-4-7 4V5a2 2 0 0 1 2-2h10a2 2 0 0 1 2 2v16z"/></svg>
<svg style="position:absolute;left:3356.0px;top:1267.0px" width="32" height="32" viewBox="0 0 24 24" fill="none" stroke="#606b7e" stroke-width="2" stroke-linecap="round" stroke-linejoin="round"><circle cx="12" cy="12" r="1"/><circle cx="19" cy="12" r="1"/><circle cx="5" cy="12" r="1"/></svg>
<div style="position:absolute;left:630px;top:1453px;width:2790px;height:2px;background:#e5e5e5"></div>
<div class="t" style="left:647.5px;top:1357px;font-size:29px;color:#0a0a0a;font-weight:400;-webkit-text-stroke:0.5px #0a0a0a;letter-spacing:0.25px">Social Enterprise Grants</div>
<div class="t" style="left:647.5px;top:1398px;font-size:25px;color:#606b7e;font-weight:400;letter-spacing:-0.2px">View source</div>
<svg style="position:absolute;left:784.0px;top:1404.0px" width="24" height="24" viewBox="0 0 24 24" fill="none" stroke="#606b7e" stroke-width="2" stroke-linecap="round" stroke-linejoin="round"><path d="M7 7h10v10"/><path d="M7 17 17 7"/></svg>
<div style="position:absolute;left:1450.5px;top:1398px;width:23px;height:2px;background:#606b7e"></div>
<div style="position:absolute;left:1856px;top:1378px;width:95px;height:40px;background:#dbeafe;border-radius:12px"></div>
<div class="t" style="left:1873px;top:1377px;font-size:25px;color:#1d4ed8;font-weight:400;-webkit-text-stroke:0.3px #1d4ed8">Grant</div>
<div style="position:absolute;left:2029px;top:1378px;width:91px;height:40px;background:#f4f4f5;border-radius:12px"></div>
<div class="t" style="left:2045.5px;top:1377px;font-size:25px;color:#0a0a0a;font-weight:400;-webkit-text-stroke:0.5px #0a0a0a">Draft</div>
<div class="t" style="left:2254px;top:1377px;font-size:29px;color:#606b7e;font-weight:400;">N/A</div>
<div class="t" style="left:2662.5px;top:1377px;font-size:29px;color:#606b7e;font-weight:400;">No deadline</div>
<div class="t" style="left:2920.5px;top:1377px;font-size:29px;color:#303030;font-weight:400;"><span style="letter-spacing:-0.2px"><span style="letter-spacing:-2.8px">1</span>6 Feb, 2026</span></div>
<svg style="position:absolute;left:3202.0px;top:1381.0px" width="32" height="32" viewBox="0 0 24 24" fill="none" stroke="#0a0a0a" stroke-width="2" stroke-linecap="round" stroke-linejoin="round"><path d="m19 21-7-4-7 4V5a2 2 0 0 1 2-2h10a2 2 0 0 1 2 2v16z"/></svg>
<svg style="position:absolute;left:3356.0px;top:1381.0px" width="32" height="32" viewBox="0 0 24 24" fill="none" stroke="#606b7e" stroke-width="2" stroke-linecap="round" stroke-linejoin="round"><circle cx="12" cy="12" r="1"/><circle cx="19" cy="12" r="1"/><circle cx="5" cy="12" r="1"/></svg>
<div style="position:absolute;left:630px;top:1567px;width:2790px;height:2px;background:#e5e5e5"></div>
<div class="t" style="left:647.5px;top:1471px;font-size:29px;color:#0a0a0a;font-weight:400;-webkit-text-stroke:0.5px #0a0a0a;letter-spacing:0.25px">Grants and Sponsorship Assessment Panel<span style="letter-spacing:-3.6px">...</span></div>
<div class="t" style="left:647.5px;top:1512px;font-size:25px;color:#606b7e;font-weight:400;letter-spacing:-0.2px">View source</div>
<svg style="position:absolute;left:784.0px;top:1518.0px" width="24" height="24" viewBox="0 0 24 24" fill="none" stroke="#606b7e" stroke-width="2" stroke-linecap="round" stroke-linejoin="round"><path d="M7 7h10v10"/><path d="M7 17 17 7"/></svg>
<div style="position:absolute;left:1450.5px;top:1512px;width:23px;height:2px;background:#606b7e"></div>
<div style="position:absolute;left:1856px;top:1492px;width:95px;height:40px;background:#dbeafe;border-radius:12px"></div>
<div class="t" style="left:1873px;top:1491px;font-size:25px;color:#1d4ed8;font-weight:400;-webkit-text-stroke:0.3px #1d4ed8">Grant</div>
<div style="position:absolute;left:2029px;top:1492px;width:91px;height:40px;background:#f4f4f5;border-radius:12px"></div>
<div class="t" style="left:2045.5px;top:1491px;font-size:25px;color:#0a0a0a;font-weight:400;-webkit-text-stroke:0.5px #0a0a0a">Draft</div>
<div class="t" style="left:2254px;top:1491px;font-size:29px;color:#303030;font-weight:400;">$<span style="letter-spacing:2.2px">2</span><span style="letter-spacing:2.2px">5</span><span style="letter-spacing:2.3px">0</span> - $<span style="letter-spacing:-2.5px">1</span><span style="letter-spacing:2.2px">5</span><span style="letter-spacing:2.3px">0</span><span style="letter-spacing:2.3px">0</span></div>
<div class="t" style="left:2662.5px;top:1475px;font-size:29px;color:#303030;font-weight:400;"><span style="letter-spacing:-0.2px">Dec 3<span style="letter-spacing:-2.8px">1</span>, 2028</span></div>
<div class="t" style="left:2662.5px;top:1510px;font-size:25px;color:#606b7e;font-weight:400;">1038 days left</div>
<div class="t" style="left:2920.5px;top:1491px;font-size:29px;color:#303030;font-weight:400;"><span style="letter-spacing:-0.2px"><span style="letter-spacing:-2.8px">1</span>6 Feb, 2026</span></div>
<svg style="position:absolute;left:3202.0px;top:1495.0px" width="32" height="32" viewBox="0 0 24 24" fill="none" stroke="#0a0a0a" stroke-width="2" stroke-linecap="round" stroke-linejoin="round"><path d="m19 21-7-4-7 4V5a2 2 0 0 1 2-2h10a2 2 0 0 1 2 2v16z"/></svg>
<svg style="position:absolute;left:3356.0px;top:1495.0px" width="32" height="32" viewBox="0 0 24 24" fill="none" stroke="#606b7e" stroke-width="2" stroke-linecap="round" stroke-linejoin="round"><circle cx="12" cy="12" r="1"/><circle cx="19" cy="12" r="1"/><circle cx="5" cy="12" r="1"/></svg>
<div style="position:absolute;left:630px;top:1681px;width:2790px;height:2px;background:#e5e5e5"></div>
<div class="t" style="left:647.5px;top:1585px;font-size:29px;color:#0a0a0a;font-weight:400;-webkit-text-stroke:0.5px #0a0a0a;letter-spacing:0.25px">Business Growth and Impact Grants</div>
<div class="t" style="left:647.5px;top:1626px;font-size:25px;color:#606b7e;font-weight:400;letter-spacing:-0.2px">View source</div>
<svg style="position:absolute;left:784.0px;top:1632.0px" width="24" height="24" viewBox="0 0 24 24" fill="none" stroke="#606b7e" stroke-width="2" stroke-linecap="round" stroke-linejoin="round"><path d="M7 7h10v10"/><path d="M7 17 17 7"/></svg>
<div style="position:absolute;left:1450.5px;top:1626px;width:23px;height:2px;background:#606b7e"></div>
<div style="position:absolute;left:1856px;top:1606px;width:95px;height:40px;background:#dbeafe;border-radius:12px"></div>
<div class="t" style="left:1873px;top:1605px;font-size:25px;color:#1d4ed8;font-weight:400;-webkit-text-stroke:0.3px #1d4ed8">Grant</div>
<div style="position:absolute;left:2029px;top:1606px;width:91px;height:40px;background:#f4f4f5;border-radius:12px"></div>
<div class="t" style="left:2045.5px;top:1605px;font-size:25px;color:#0a0a0a;font-weight:400;-webkit-text-stroke:0.5px #0a0a0a">Draft</div>
<div class="t" style="left:2254px;top:1605px;font-size:29px;color:#606b7e;font-weight:400;">N/A</div>
<div class="t" style="left:2662.5px;top:1605px;font-size:29px;color:#606b7e;font-weight:400;">No deadline</div>
<div class="t" style="left:2920.5px;top:1605px;font-size:29px;color:#303030;font-weight:400;"><span style="letter-spacing:-0.2px"><span style="letter-spacing:-2.8px">1</span>6 Feb, 2026</span></div>
<svg style="position:absolute;left:3202.0px;top:1609.0px" width="32" height="32" viewBox="0 0 24 24" fill="none" stroke="#0a0a0a" stroke-width="2" stroke-linecap="round" stroke-linejoin="round"><path d="m19 21-7-4-7 4V5a2 2 0 0 1 2-2h10a2 2 0 0 1 2 2v16z"/></svg>
<svg style="position:absolute;left:3356.0px;top:1609.0px" width="32" height="32" viewBox="0 0 24 24" fill="none" stroke="#606b7e" stroke-width="2" stroke-linecap="round" stroke-linejoin="round"><circle cx="12" cy="12" r="1"/><circle cx="19" cy="12" r="1"/><circle cx="5" cy="12" r="1"/></svg>
<div style="position:absolute;left:630px;top:1795px;width:2790px;height:2px;background:#e5e5e5"></div>
<div class="t" style="left:647.5px;top:1699px;font-size:29px;color:#0a0a0a;font-weight:400;-webkit-text-stroke:0.5px #0a0a0a;letter-spacing:0.25px">Event Partnership Program 2026</div>
<div class="t" style="left:647.5px;top:1740px;font-size:25px;color:#606b7e;font-weight:400;letter-spacing:-0.2px">View source</div>
<svg style="position:absolute;left:784.0px;top:1746.0px" width="24" height="24" viewBox="0 0 24 24" fill="none" stroke="#606b7e" stroke-width="2" stroke-linecap="round" stroke-linejoin="round"><path d="M7 7h10v10"/><path d="M7 17 17 7"/></svg>
<div style="position:absolute;left:1450.5px;top:1740px;width:23px;height:2px;background:#606b7e"></div>
<div style="position:absolute;left:1856px;top:1720px;width:95px;height:40px;background:#dbeafe;border-radius:12px"></div>
<div class="t" style="left:1873px;top:1719px;font-size:25px;color:#1d4ed8;font-weight:400;-webkit-text-stroke:0.3px #1d4ed8">Grant</div>
<div style="position:absolute;left:2029px;top:1720px;width:111px;height:40px;background:#fee2e2;border-radius:12px"></div>
<div class="t" style="left:2045.5px;top:1719px;font-size:25px;color:#0a0a0a;font-weight:400;-webkit-text-stroke:0.5px #0a0a0a">Closed</div>
<div class="t" style="left:2254px;top:1719px;font-size:29px;color:#303030;font-weight:400;">Up to $<span style="letter-spacing:-2.5px">1</span><span style="letter-spacing:2.2px">5</span><span style="letter-spacing:2.3px">0</span><span style="letter-spacing:2.3px">0</span><span style="letter-spacing:2.3px">0</span><span style="letter-spacing:2.3px">0</span></div>
<div class="t" style="left:2662.5px;top:1719px;font-size:29px;color:#606b7e;font-weight:400;">No deadline</div>
<div class="t" style="left:2920.5px;top:1719px;font-size:29px;color:#303030;font-weight:400;"><span style="letter-spacing:-0.2px"><span style="letter-spacing:-2.8px">1</span>6 Feb, 2026</span></div>
<svg style="position:absolute;left:3202.0px;top:1723.0px" width="32" height="32" viewBox="0 0 24 24" fill="none" stroke="#0a0a0a" stroke-width="2" stroke-linecap="round" stroke-linejoin="round"><path d="m19 21-7-4-7 4V5a2 2 0 0 1 2-2h10a2 2 0 0 1 2 2v16z"/></svg>
<svg style="position:absolute;left:3356.0px;top:1723.0px" width="32" height="32" viewBox="0 0 24 24" fill="none" stroke="#606b7e" stroke-width="2" stroke-linecap="round" stroke-linejoin="round"><circle cx="12" cy="12" r="1"/><circle cx="19" cy="12" r="1"/><circle cx="5" cy="12" r="1"/></svg>
<div style="position:absolute;left:630px;top:1909px;width:2790px;height:2px;background:#e5e5e5"></div>
<div class="t" style="left:647.5px;top:1813px;font-size:29px;color:#0a0a0a;font-weight:400;-webkit-text-stroke:0.5px #0a0a0a;letter-spacing:0.25px">Social Enterprise Grants</div>
<div class="t" style="left:647.5px;top:1854px;font-size:25px;color:#606b7e;font-weight:400;letter-spacing:-0.2px">View source</div>
<svg style="position:absolute;left:784.0px;top:1860.0px" width="24" height="24" viewBox="0 0 24 24" fill="none" stroke="#606b7e" stroke-width="2" stroke-linecap="round" stroke-linejoin="round"><path d="M7 7h10v10"/><path d="M7 17 17 7"/></svg>
<div style="position:absolute;left:1450.5px;top:1854px;width:23px;height:2px;background:#606b7e"></div>
<div style="position:absolute;left:1856px;top:1834px;width:95px;height:40px;background:#dbeafe;border-radius:12px"></div>
<div class="t" style="left:1873px;top:1833px;font-size:25px;color:#1d4ed8;font-weight:400;-webkit-text-stroke:0.3px #1d4ed8">Grant</div>
<div style="position:absolute;left:2029px;top:1834px;width:91px;height:40px;background:#f4f4f5;border-radius:12px"></div>
<div class="t" style="left:2045.5px;top:1833px;font-size:25px;color:#0a0a0a;font-weight:400;-webkit-text-stroke:0.5px #0a0a0a">Draft</div>
<div class="t" style="left:2254px;top:1833px;font-size:29px;color:#606b7e;font-weight:400;">N/A</div>
<div class="t" style="left:2662.5px;top:1833px;font-size:29px;color:#606b7e;font-weight:400;">No deadline</div>
<div class="t" style="left:2920.5px;top:1833px;font-size:29px;color:#303030;font-weight:400;"><span style="letter-spacing:-0.2px"><span style="letter-spacing:-2.8px">1</span>6 Feb, 2026</span></div>
<svg style="position:absolute;left:3202.0px;top:1837.0px" width="32" height="32" viewBox="0 0 24 24" fill="none" stroke="#0a0a0a" stroke-width="2" stroke-linecap="round" stroke-linejoin="round"><path d="m19 21-7-4-7 4V5a2 2 0 0 1 2-2h10a2 2 0 0 1 2 2v16z"/></svg>
<svg style="position:absolute;left:3356.0px;top:1837.0px" width="32" height="32" viewBox="0 0 24 24" fill="none" stroke="#606b7e" stroke-width="2" stroke-linecap="round" stroke-linejoin="round"><circle cx="12" cy="12" r="1"/><circle cx="19" cy="12" r="1"/><circle cx="5" cy="12" r="1"/></svg>
<div style="position:absolute;left:0px;top:0px;width:72px;height:1882px;background:linear-gradient(to right,rgba(0,0,0,0.13) 0px,rgba(0,0,0,0.075) 9px,rgba(0,0,0,0.05) 22px,rgba(0,0,0,0.025) 42px,rgba(0,0,0,0) 72px);pointer-events:none"></div>
</body></html>
